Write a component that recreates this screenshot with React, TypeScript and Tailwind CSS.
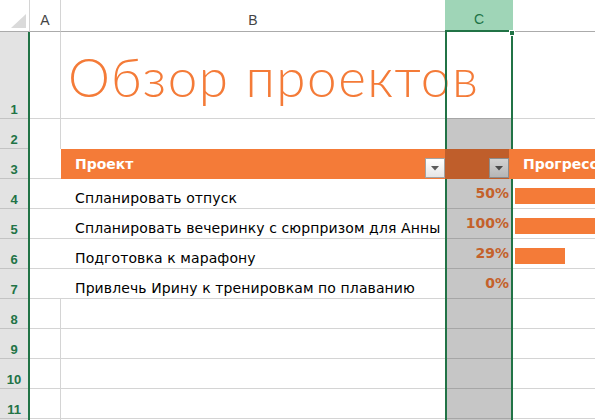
import React from 'react';

const GREEN = 'bg-[#217346]';

const rows = [
  { n: 4, task: 'Спланировать отпуск', pct: 50 },
  { n: 5, task: 'Спланировать вечеринку с сюрпризом для Анны', pct: 100 },
  { n: 6, task: 'Подготовка к марафону', pct: 29 },
  { n: 7, task: 'Привлечь Ирину к тренировкам по плаванию', pct: 0 },
];

function RowHeader({ n, h }: { n?: number; h: string }) {
  return (
    <div className="flex shrink-0">
      <div
        className={`${h} flex w-[28px] items-end justify-center border-b border-[#c3c3c3] bg-[#e3e3e3] pb-[1px] text-[13px] font-bold leading-[15px] text-[#217346]`}
        style={{ fontFamily: '"Liberation Sans", Arial, sans-serif' }}
      >
        {n}
      </div>
      <div className={`w-[2px] ${GREEN}`} />
    </div>
  );
}

function Dropdown({ dark }: { dark?: boolean }) {
  return (
    <div
      className={`mb-[1px] flex h-[20px] w-[20px] shrink-0 items-center justify-center self-end border ${
        dark ? 'border-[#8c8c8c] bg-gradient-to-b from-[#d2d2d2] to-[#b6b6b6]' : 'border-[#a3a3a3] bg-gradient-to-b from-white to-[#e6e6e6]'
      }`}
    >
      <svg width="8" height="5" viewBox="0 0 8 5">
        <path d="M0 0 H8 L4 4.5 Z" fill={dark ? '#4a4a4a' : '#5a5a5a'} />
      </svg>
    </div>
  );
}

export default function App() {
  const bodyFont = { fontFamily: '"DejaVu Sans", "Noto Sans", sans-serif' };
  return (
    <div className="relative h-[420px] w-[595px] overflow-hidden bg-white" style={bodyFont}>
      {/* column headers */}
      <div
        className="flex h-[32px] text-[14px] leading-[16px] text-[#444]"
        style={{ fontFamily: '"Liberation Sans", Arial, sans-serif' }}
      >
        <div className="relative w-[30px] shrink-0 border-r border-b border-r-[#d4d4d4] border-b-[#ababab]">
          <svg className="absolute right-[3px] bottom-[3px]" width="15" height="14" viewBox="0 0 15 14">
            <path d="M15 0 V14 H0 Z" fill="#dadada" />
          </svg>
        </div>
        <div className="flex w-[31px] shrink-0 items-end justify-center border-r border-b border-r-[#d4d4d4] border-b-[#ababab] pb-[3px]">
          A
        </div>
        <div className="flex w-[384px] shrink-0 items-end justify-center border-b border-[#ababab] pb-[3px]">B</div>
        <div className="flex w-[68px] shrink-0 items-end justify-center border-b-2 border-[#217346] bg-[#9fd5b7] pb-[3px] text-[#217346]">
          C
        </div>
        <div className="flex-1 border-b border-[#ababab]" />
      </div>

      {/* row 1 */}
      <div className="flex h-[87px]">
        <RowHeader n={1} h="h-[87px]" />
        <div className="w-[31px] shrink-0 border-r border-b border-[#d4d4d4]" />
        <div className="flex w-[384px] shrink-0 items-end border-b border-[#d4d4d4] pb-[15px] pl-[7px]">
          <span
            className="whitespace-nowrap text-[53px] font-light leading-none tracking-[1.5px] text-[#f47b38]"
            style={{ fontFamily: 'Lato, "Noto Sans", sans-serif' }}
          >
            Обзор проектов
          </span>
        </div>
        <div className={`w-[2px] ${GREEN}`} />
        <div className="w-[64px] shrink-0 border-b border-[#a6a6a6]" />
        <div className={`w-[2px] ${GREEN}`} />
        <div className="flex-1 border-b border-[#d4d4d4]" />
      </div>

      {/* row 2 */}
      <div className="flex h-[30px]">
        <RowHeader n={2} h="h-[30px]" />
        <div className="w-[31px] shrink-0 border-r border-[#d4d4d4]" />
        <div className="w-[384px] shrink-0" />
        <div className={`w-[2px] ${GREEN}`} />
        <div className="w-[64px] shrink-0 bg-[#c6c6c6]" />
        <div className={`w-[2px] ${GREEN}`} />
        <div className="flex-1" />
      </div>

      {/* row 3: table header */}
      <div className="flex h-[30px]">
        <RowHeader n={3} h="h-[30px]" />
        <div className="w-[31px] shrink-0 border-b border-[#d4d4d4]" />
        <div className="flex w-[384px] shrink-0 items-center justify-between bg-[#f47b38] pl-[14px] text-[14px] font-bold text-white">
          <span>Проект</span>
          <Dropdown />
        </div>
        <div className={`w-[2px] ${GREEN}`} />
        <div className="flex w-[64px] shrink-0 justify-end bg-[#bf5e2b]">
          <Dropdown dark />
        </div>
        <div className={`w-[2px] ${GREEN}`} />
        <div className="flex flex-1 items-center bg-[#f47b38] pl-[14px] text-[14px] font-bold whitespace-nowrap text-white">
          Прогресс
        </div>
      </div>

      {/* rows 4-7 */}
      {rows.map((r) => (
        <div key={r.n} className="flex h-[30px]">
          <RowHeader n={r.n} h="h-[30px]" />
          <div className="w-[31px] shrink-0 border-b border-[#d4d4d4]" />
          <div className="flex w-[384px] shrink-0 items-end border-b border-[#d4d4d4] pb-[1px] pl-[14px] text-[14px] leading-[17px] tracking-[0.1px] whitespace-nowrap text-black">
            {r.task}
          </div>
          <div className={`w-[2px] ${GREEN}`} />
          <div className="flex w-[64px] shrink-0 items-center justify-end border-b border-[#a6a6a6] bg-[#c6c6c6] pr-[2px] text-[14px] font-bold text-[#c4612b]">
            {r.pct}%
          </div>
          <div className={`w-[2px] ${GREEN}`} />
          <div className="flex-1 overflow-hidden border-b border-[#d4d4d4] pt-[9px] pb-[4px] pl-[2px]">
            <div className="h-full bg-[#f47b38]" style={{ width: `${(r.pct / 100) * 172}px` }} />
          </div>
        </div>
      ))}

      {/* rows 8-12 */}
      {[8, 9, 10, 11, 0].map((n) => (
        <div key={n} className="flex h-[30px]">
          <RowHeader n={n || undefined} h="h-[30px]" />
          <div className="w-[31px] shrink-0 border-r border-b border-[#d4d4d4]" />
          <div className="w-[384px] shrink-0 border-b border-[#d4d4d4]" />
          <div className={`w-[2px] ${GREEN}`} />
          <div className="w-[64px] shrink-0 border-b border-[#a6a6a6] bg-[#c6c6c6]" />
          <div className={`w-[2px] ${GREEN}`} />
          <div className="flex-1 border-b border-[#d4d4d4]" />
        </div>
      ))}

      {/* fill handle */}
      <div className="absolute top-[30px] left-[509px] h-[6px] w-[6px] border border-white bg-[#217346]" />
    </div>
  );
}
